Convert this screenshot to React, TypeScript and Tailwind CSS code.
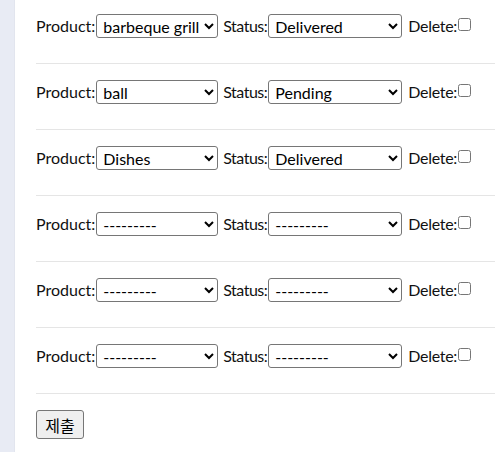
import React from "react";

const rows = [
  { product: "barbeque grill", status: "Delivered" },
  { product: "ball", status: "Pending" },
  { product: "Dishes", status: "Delivered" },
  { product: "---------", status: "---------" },
  { product: "---------", status: "---------" },
  { product: "---------", status: "---------" },
];

const products = ["---------", "barbeque grill", "ball", "Dishes"];
const statuses = ["---------", "Pending", "Delivered"];

export default function App() {
  return (
    <div className="flex w-[495px] h-[452px] bg-white overflow-hidden text-[16px] text-[#111]" style={{ fontFamily: 'Lato, "Noto Sans CJK KR", sans-serif' }}>
      <div className="w-[15px] shrink-0 bg-[#e8ebf4] border-r border-[#e2e5ee]" />
      <div className="flex-1 pl-[21px] pt-[14px]">
        {rows.map((r, i) => (
          <div key={i} className={`flex items-center h-[24px] ${i === 0 ? "" : "mt-[16px]"}`}>
            <span className="leading-[24px]">Product:</span>
            <select defaultValue={r.product} className="ml-[1px] w-[122px] h-[24px] border border-[#767676] rounded-[3px] bg-white pl-[2px] text-[16px] text-black">
              {products.map((p) => (
                <option key={p}>{p}</option>
              ))}
            </select>
            <span className="ml-[5px] tracking-[-0.5px]">Status:</span>
            <select defaultValue={r.status} className="ml-[1px] w-[134px] h-[24px] border border-[#767676] rounded-[3px] bg-white pl-[2px] text-[16px] text-black">
              {statuses.map((p) => (
                <option key={p}>{p}</option>
              ))}
            </select>
            <span className="ml-[6px] tracking-[-0.3px]">Delete:</span>
            <input type="checkbox" className="ml-[1px] w-[13px] h-[13px] -mt-[3px]" />
          </div>
        )).reduce<React.ReactNode[]>((acc, el, i) => {
          acc.push(el);
          acc.push(<div key={`sep${i}`} className="mt-[25px] border-t border-[#e5e5e5]" />);
          return acc;
        }, [])}
        <button className="mt-[16px] w-[48px] h-[29px] border border-[#767676] rounded-[3px] bg-[#efefef] text-[16px] text-black" style={{ fontFamily: '"Noto Sans CJK KR", sans-serif' }}>
          제출
        </button>
      </div>
    </div>
  );
}
